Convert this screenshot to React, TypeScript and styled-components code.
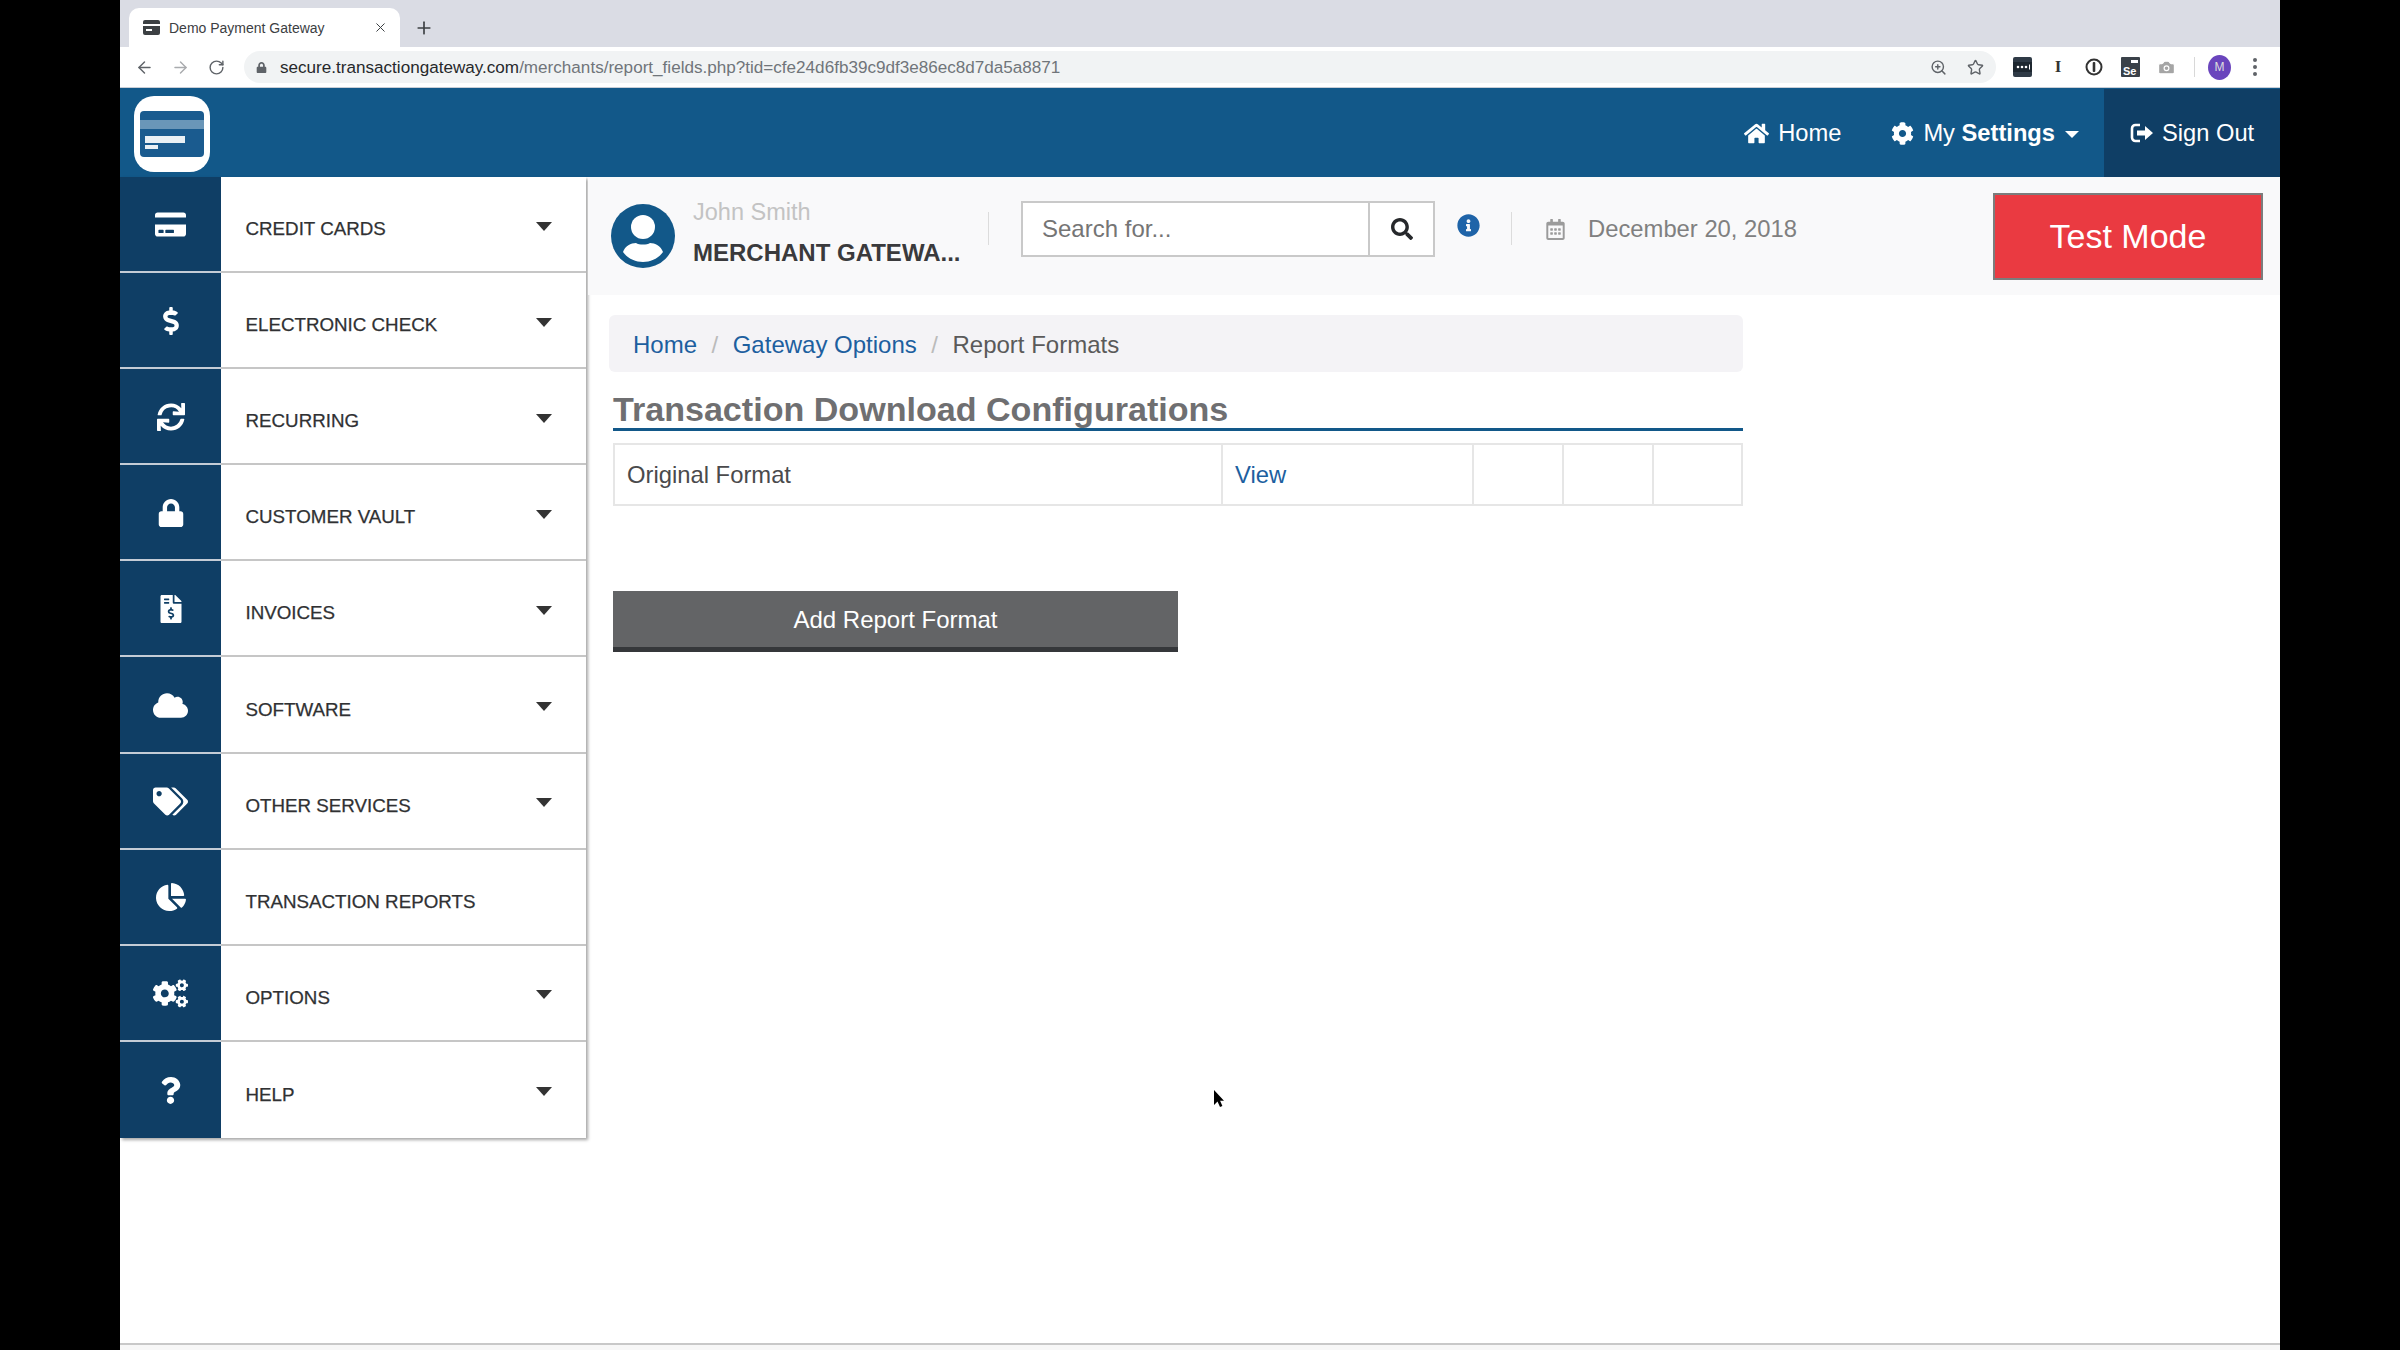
import React from 'react';
import styled, { createGlobalStyle } from 'styled-components';
import { ArrowLeft, ArrowRight, Camera, Plus, RotateCw, Star, X, ZoomIn } from 'lucide-react';
import {
  FaChartPie,
  FaCloud,
  FaCog,
  FaCogs,
  FaCreditCard,
  FaDollarSign,
  FaFileInvoiceDollar,
  FaHome,
  FaInfoCircle,
  FaLock,
  FaQuestion,
  FaRegCalendarAlt,
  FaSearch,
  FaSync,
  FaTags,
} from 'react-icons/fa';

const GlobalStyle = createGlobalStyle`
  html, body { margin: 0; padding: 0; background: #000; }
  * { box-sizing: border-box; }
  body { font-family: "Liberation Sans", Arial, sans-serif; }
`;

const Screen = styled.div`
  position: relative;
  width: 2160px;
  height: 1350px;
  margin-left: 120px;
  background: #fff;
  overflow: hidden;
  display: flex;
  flex-direction: column;
`;

/* browser chrome */
const TabStrip = styled.div`
  height: 47px;
  flex: none;
  background: #dadce4;
  display: flex;
  align-items: flex-end;
  padding-left: 9px;
`;

const Tab = styled.div`
  width: 271px;
  height: 39px;
  background: #fff;
  border-radius: 10px 10px 0 0;
  display: flex;
  align-items: center;
  padding: 0 0 0 14px;
  color: #3c4043;
  font-size: 14px;
`;

const TabTitle = styled.span`
  margin-left: 9px;
  flex: 1;
`;

const NewTab = styled.div`
  width: 48px;
  height: 39px;
  display: flex;
  align-items: center;
  justify-content: center;
  color: #3c4043;
`;

const Toolbar = styled.div`
  height: 41px;
  flex: none;
  background: #fff;
  border-bottom: 1px solid #c9ced6;
  display: flex;
  align-items: center;
  padding-left: 6px;
`;

const NavButton = styled.div<{ $muted?: boolean }>`
  width: 36px;
  display: flex;
  justify-content: center;
  color: ${p => (p.$muted ? '#a9abae' : '#5f6368')};
`;

const AddressBar = styled.div`
  width: 1752px;
  height: 32px;
  margin-left: 10px;
  background: #f1f3f4;
  border-radius: 16px;
  display: flex;
  align-items: center;
  padding: 1px 12px 0 12px;
  font-size: 17.1px;
  color: #70757a;
`;

const UrlHost = styled.span`
  color: #26282b;
  margin-left: 13px;
`;

const AddressIcons = styled.div`
  margin-left: auto;
  display: flex;
  gap: 20px;
  color: #5f6368;
`;

const Extensions = styled.div`
  display: flex;
  align-items: center;
  margin-left: 8px;
`;

const ExtSlot = styled.div`
  width: 36px;
  display: flex;
  justify-content: center;
  align-items: center;
`;

const ToolbarDivider = styled.div`
  width: 1px;
  height: 20px;
  background: #d8d8d8;
  margin: 0 13px 0 10px;
`;

const Profile = styled.div`
  width: 23px;
  height: 25px;
  border-radius: 50%;
  background: #6a45bd;
  color: #ddd;
  font-size: 12px;
  display: flex;
  align-items: center;
  justify-content: center;
`;

const MenuDots = styled.div`
  margin-left: 22px;
  display: flex;
  flex-direction: column;
  gap: 3px;
  & > i { width: 4px; height: 4px; border-radius: 50%; background: #5f6368; display: block; }
`;

/* site header */
const Header = styled.header`
  height: 89px;
  flex: none;
  background: #125889;
  display: flex;
  align-items: stretch;
  color: #fff;
  font-size: 23.7px;
`;

const Logo = styled.div`
  width: 76px;
  height: 76px;
  margin: 8px 0 0 14px;
  background: #fff;
  border-radius: 20px;
  display: flex;
  align-items: center;
  justify-content: center;
`;

const HeaderNav = styled.nav`
  margin-left: auto;
  display: flex;
  align-items: center;
  padding-top: 1px;
`;

const HeaderLink = styled.a<{ $end: number }>`
  display: flex;
  align-items: center;
  gap: 9px;
  margin-right: ${p => p.$end}px;
`;

const SettingsCaret = styled.span`
  width: 0;
  height: 0;
  border-left: 7px solid transparent;
  border-right: 7px solid transparent;
  border-top: 7px solid #fff;
  margin-left: 1px;
  margin-top: 3px;
`;

const SignOut = styled.a`
  width: 176px;
  height: 100%;
  background: #0f3e65;
  display: flex;
  align-items: center;
  gap: 8px;
  padding-left: 26px;
`;

/* body */
const Body = styled.div`
  flex: 1;
  display: grid;
  grid-template-columns: 468px 1fr;
  align-items: start;
  min-height: 0;
`;

const Sidebar = styled.aside`
  width: 466px;
  box-shadow: 2px 2px 3px rgba(0, 0, 0, 0.35);
  display: flex;
  flex-direction: column;
  background: #fff;
`;

const SideRow = styled.div`
  height: 96.1px;
  display: grid;
  grid-template-columns: 101px 1fr;
`;

const SideIcon = styled.div<{ $last: boolean }>`
  background: #0f3e65;
  color: #fff;
  display: flex;
  align-items: center;
  justify-content: center;
  padding-top: 1px;
  border-bottom: ${p => (p.$last ? 'none' : '2px solid #c4ccd6')};
`;

const SideLabel = styled.div<{ $last: boolean }>`
  display: flex;
  align-items: center;
  padding: 10px 34px 0 24.5px;
  font-size: 18.75px;
  color: #303133;
  border-bottom: ${p => (p.$last ? 'none' : '2px solid #c6c6c6')};
  -webkit-text-stroke: 0.25px #303133;
`;

const SideCaret = styled.span`
  margin-left: auto;
  width: 0;
  height: 0;
  margin-top: -6px;
  border-left: 8px solid transparent;
  border-right: 8px solid transparent;
  border-top: 9px solid #333;
`;

const Main = styled.main`
  display: flex;
  flex-direction: column;
  min-width: 0;
`;

const SubHeader = styled.div`
  height: 118px;
  background: #f9f9fa;
  display: flex;
  align-items: flex-start;
  padding-left: 23px;
`;

const Avatar = styled.div`
  margin-top: 27px;
  width: 64px;
  height: 64px;
`;

const UserBlock = styled.div`
  margin: 20px 0 0 18px;
  width: 295px;
`;

const UserName = styled.div`
  color: #c3c3c3;
  font-size: 23.5px;
  line-height: 30px;
`;

const Merchant = styled.div`
  margin-top: 10px;
  color: #3a3a3c;
  font-size: 24px;
  font-weight: 700;
  line-height: 32px;
`;

const VDivider = styled.div<{ $left: number; $top: number }>`
  width: 1px;
  height: 33px;
  background: #dcdcdc;
  margin-top: ${p => p.$top}px;
  margin-left: ${p => p.$left}px;
`;

const SearchBox = styled.div`
  margin: 24px 0 0 32px;
  width: 414px;
  height: 56px;
  display: flex;
  background: #fff;
  border: 2px solid #c9c9c9;
`;

const SearchInput = styled.div`
  flex: 1;
  display: flex;
  align-items: center;
  padding-left: 19px;
  font-size: 24px;
  color: #757575;
`;

const SearchButton = styled.div`
  width: 65px;
  border-left: 2px solid #c9c9c9;
  display: flex;
  align-items: center;
  justify-content: center;
  color: #26282b;
  font-size: 22px;
`;

const InfoIcon = styled.div`
  margin: 37px 0 0 22px;
  color: #1f64a8;
  font-size: 23px;
  line-height: 1;
`;

const DateBlock = styled.div`
  margin: 38px 0 0 33px;
  display: flex;
  align-items: center;
  gap: 22px;
  color: #808080;
  font-size: 23.8px;
  height: 28px;
  & > svg { color: #9b9b9b; font-size: 21px; }
`;

const TestMode = styled.div`
  margin: 16px 17px 0 auto;
  width: 270px;
  height: 87px;
  background: #ea3a41;
  border: 2px solid #7c7c7c;
  color: #fff;
  font-size: 34px;
  display: flex;
  align-items: center;
  justify-content: center;
`;

const Content = styled.div`
  width: 1134px;
  margin-left: 21px;
  display: flex;
  flex-direction: column;
  align-items: stretch;
`;

const Breadcrumb = styled.div`
  margin: 20px 0 0 0;
  height: 57px;
  background: #f4f3f6;
  border-radius: 6px;
  display: flex;
  align-items: center;
  padding: 2px 0 0 24px;
  font-size: 24px;
  color: #5a5a5a;
`;

const Crumb = styled.a`
  color: #1d5f9f;
`;

const CrumbSep = styled.span`
  color: #bbb;
  margin: 0 14.5px;
`;

const Title = styled.h1`
  margin: 19px 0 0 4px;
  height: 37px;
  font-size: 34.1px;
  font-weight: 700;
  line-height: 37px;
  color: #6f6f71;
  white-space: nowrap;
`;

const TitleRule = styled.div`
  height: 3px;
  margin-left: 4px;
  background: #125889;
`;

const ReportTable = styled.div`
  margin: 12px 0 0 4px;
  height: 63px;
  display: grid;
  grid-template-columns: 608px 251px 90px 90px 1fr;
  border: 2px solid #e6e6e6;
  font-size: 23.8px;
  color: #4a4a4c;
`;

const Cell = styled.div<{ $last?: boolean }>`
  display: flex;
  align-items: center;
  padding-left: 12px;
  border-right: ${p => (p.$last ? 'none' : '2px solid #e6e6e6')};
`;

const AddButton = styled.div`
  margin: 85px 0 0 4px;
  width: 565px;
  height: 61px;
  background: #636466;
  border-bottom: 5px solid #35373a;
  color: #fff;
  font-size: 24px;
  padding-top: 1px;
  display: flex;
  align-items: center;
  justify-content: center;
`;

const Footer = styled.div`
  position: absolute;
  left: 0;
  right: 0;
  bottom: 0;
  height: 7px;
  background: #f7f7f7;
  border-top: 2px solid #c8c8c8;
`;

const Cursor = styled.svg`
  position: absolute;
  left: 1093px;
  top: 1089px;
`;

const menu = [
  { label: 'CREDIT CARDS', icon: <FaCreditCard size={31} />, caret: true },
  { label: 'ELECTRONIC CHECK', icon: <FaDollarSign size={28} />, caret: true },
  { label: 'RECURRING', icon: <FaSync size={28} />, caret: true },
  { label: 'CUSTOMER VAULT', icon: <FaLock size={28} />, caret: true },
  { label: 'INVOICES', icon: <FaFileInvoiceDollar size={28} />, caret: true },
  { label: 'SOFTWARE', icon: <FaCloud size={35} />, caret: true },
  { label: 'OTHER SERVICES', icon: <FaTags size={35} />, caret: true },
  { label: 'TRANSACTION REPORTS', icon: <FaChartPie size={30} />, caret: false },
  { label: 'OPTIONS', icon: <FaCogs size={35} />, caret: true },
  { label: 'HELP', icon: <FaQuestion size={27} />, caret: true },
];

const App: React.FC = () => (
  <>
    <GlobalStyle />
    <Screen>
      <TabStrip>
        <Tab>
          <svg width="17" height="17" viewBox="0 0 17 17">
            <rect width="17" height="15" y="1" rx="2" fill="#3c4043" />
            <rect x="0" y="5" width="17" height="2" fill="#fff" />
            <rect x="3" y="10" width="6" height="2" fill="#fff" />
          </svg>
          <TabTitle>Demo Payment Gateway</TabTitle>
          <X size={15} strokeWidth={1.6} style={{ marginRight: 12 }} />
        </Tab>
        <NewTab>
          <Plus size={20} strokeWidth={2} />
        </NewTab>
      </TabStrip>

      <Toolbar>
        <NavButton><ArrowLeft size={19} strokeWidth={1.8} /></NavButton>
        <NavButton $muted><ArrowRight size={19} strokeWidth={1.8} /></NavButton>
        <NavButton><RotateCw size={17} strokeWidth={2} /></NavButton>
        <AddressBar>
          <FaLock size={11} color="#5f6368" />
          <UrlHost>secure.transactiongateway.com</UrlHost>
          /merchants/report_fields.php?tid=cfe24d6fb39c9df3e86ec8d7da5a8871
          <AddressIcons>
            <ZoomIn size={17} />
            <Star size={17} />
          </AddressIcons>
        </AddressBar>
        <Extensions>
          <ExtSlot>
            <svg width="19" height="20" viewBox="0 0 19 20">
              <rect width="19" height="20" rx="2" fill="#2f3a46" />
              <rect y="5" width="19" height="10" fill="#1e2730" />
              <circle cx="5" cy="10" r="1.3" fill="#fff" />
              <circle cx="9" cy="10" r="1.3" fill="#fff" />
              <circle cx="13" cy="10" r="1.3" fill="#fff" />
              <rect x="16" y="7.5" width="1" height="5" fill="#fff" />
            </svg>
          </ExtSlot>
          <ExtSlot>
            <span style={{ fontFamily: '"Liberation Serif", serif', fontWeight: 700, fontSize: 17, color: '#333' }}>I</span>
          </ExtSlot>
          <ExtSlot>
            <svg width="18" height="18" viewBox="0 0 18 18">
              <circle cx="9" cy="9" r="7.5" fill="#fff" stroke="#333" strokeWidth="2" />
              <rect x="7.7" y="4" width="2.6" height="10" rx="1" fill="#333" />
            </svg>
          </ExtSlot>
          <ExtSlot>
            <svg width="19" height="20" viewBox="0 0 19 20">
              <rect width="19" height="20" rx="1" fill="#3a4149" />
              <rect x="10" y="3" width="7" height="3" fill="#fff" />
              <text x="2" y="18" fontSize="11" fontFamily="Liberation Sans" fontWeight="700" fill="#fff">Se</text>
            </svg>
          </ExtSlot>
          <ExtSlot>
            <Camera size={19} color="#fff" fill="#a5a5a5" stroke="#fff" strokeWidth={1.5} />
          </ExtSlot>
        </Extensions>
        <ToolbarDivider />
        <Profile>M</Profile>
        <MenuDots><i /><i /><i /></MenuDots>
      </Toolbar>

      <Header>
        <Logo>
          <svg width="64" height="46" viewBox="0 0 64 46">
            <rect width="64" height="46" rx="4" fill="#1a5b8f" />
            <rect y="9" width="64" height="9" fill="#6a96b8" />
            <rect x="5" y="25" width="40" height="7" fill="#e9f0f5" />
            <rect x="5" y="34" width="13" height="4" fill="#e9f0f5" />
          </svg>
        </Logo>
        <HeaderNav>
          <HeaderLink $end={50}><FaHome size={25} />Home</HeaderLink>
          <HeaderLink $end={25}>
            <FaCog size={23} />
            <span>My <b>Settings</b></span>
            <SettingsCaret />
          </HeaderLink>
          <SignOut>
            <svg width="24" height="20" viewBox="0 0 24 20">
              <path d="M10 2H5.5A3.5 3.5 0 0 0 2 5.500v9A3.500 3.500 0 0 0 5.500 18H10" fill="none" stroke="#fff" strokeWidth="2.600" />
              <path d="M7 7.500h8V3l8 7-8 7v-4.500H7z" fill="#fff" />
            </svg>
            Sign Out
          </SignOut>
        </HeaderNav>
      </Header>

      <Body>
        <Sidebar>
          {menu.map((item, i) => (
            <SideRow key={item.label}>
              <SideIcon $last={i === menu.length - 1}>{item.icon}</SideIcon>
              <SideLabel $last={i === menu.length - 1}>
                {item.label}
                {item.caret && <SideCaret />}
              </SideLabel>
            </SideRow>
          ))}
        </Sidebar>

        <Main>
          <SubHeader>
            <Avatar>
              <svg width="64" height="64" viewBox="0 0 64 64">
                <circle cx="32" cy="32" r="32" fill="#125889" />
                <ellipse cx="32" cy="23" rx="12" ry="12" fill="#fff" />
                <path d="M12 48c2-6 8-9 13-9 3 2 11 2 14 0 5 0 11 3 13 9-4 6-12 10-20 10s-16-4-20-10z" fill="#fff" />
              </svg>
            </Avatar>
            <UserBlock>
              <UserName>John Smith</UserName>
              <Merchant>MERCHANT GATEWA...</Merchant>
            </UserBlock>
            <VDivider $left={0} $top={35} />
            <SearchBox>
              <SearchInput>Search for...</SearchInput>
              <SearchButton><FaSearch /></SearchButton>
            </SearchBox>
            <InfoIcon><FaInfoCircle /></InfoIcon>
            <VDivider $left={31} $top={35} />
            <DateBlock><FaRegCalendarAlt />December 20, 2018</DateBlock>
            <TestMode>Test Mode</TestMode>
          </SubHeader>

          <Content>
            <Breadcrumb>
              <Crumb>Home</Crumb>
              <CrumbSep>/</CrumbSep>
              <Crumb>Gateway Options</Crumb>
              <CrumbSep>/</CrumbSep>
              Report Formats
            </Breadcrumb>
            <Title>Transaction Download Configurations</Title>
            <TitleRule />
            <ReportTable>
              <Cell>Original Format</Cell>
              <Cell><Crumb>View</Crumb></Cell>
              <Cell />
              <Cell />
              <Cell $last />
            </ReportTable>
            <AddButton>Add Report Format</AddButton>
          </Content>
        </Main>
      </Body>

      <Footer />
      <Cursor width="12" height="20" viewBox="0 0 12 20">
        <path d="M1 1v15l3.5-3.4L7 18l2.4-1-2.3-5.2H11z" fill="#000" />
      </Cursor>
    </Screen>
  </>
);

export default App;
